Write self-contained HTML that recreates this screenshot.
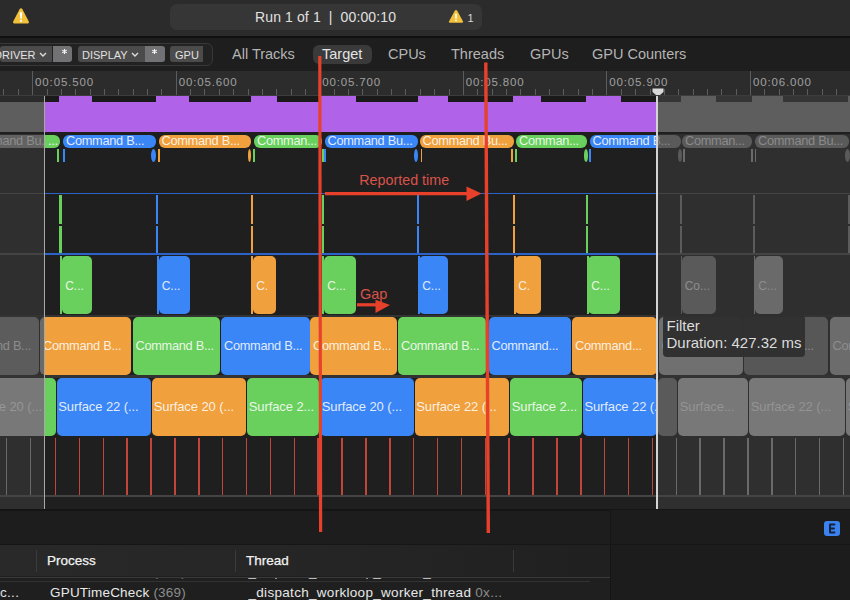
<!DOCTYPE html><html><head><meta charset="utf-8"><style>
html,body{margin:0;padding:0;width:850px;height:600px;overflow:hidden;background:#1f1f1f;}
body{position:relative;font-family:"Liberation Sans",sans-serif;}
.t{position:absolute;white-space:nowrap;line-height:1;}
.clip{position:absolute;overflow:hidden;}
</style></head><body>
<div style="position:absolute;left:0px;top:0px;width:850px;height:36px;background:#2b2b2b;border-radius:0px;"></div>
<div style="position:absolute;left:0px;top:36px;width:850px;height:2px;background:#101010;border-radius:0px;"></div>
<svg style="position:absolute;left:12px;top:7px" width="18" height="18" viewBox="0 0 18 17" preserveAspectRatio="none">
<path d="M9 1.2 Q9.9 1.2 10.4 2.1 L16.8 13.8 Q17.3 14.9 16.2 15.6 L1.8 15.6 Q0.7 14.9 1.2 13.8 L7.6 2.1 Q8.1 1.2 9 1.2 Z" fill="#f2c13b"/>
<path d="M7.6 5.2 Q9 4.2 10.4 5.2 L9.6 11.2 Q9 11.7 8.4 11.2 Z" fill="#fff"/><circle cx="9" cy="13.1" r="1.1" fill="#fff"/></svg>
<div style="position:absolute;left:170px;top:3.8px;width:312.2px;height:25.8px;background:#363636;border-radius:7px;"></div>
<div class="t" style="left:255px;top:10px;font-size:14px;color:#e0e0e0;letter-spacing:0.12px">Run 1 of 1&nbsp;&nbsp;|&nbsp;&nbsp;00:00:10</div>
<svg style="position:absolute;left:448px;top:9px" width="16" height="15" viewBox="0 0 18 17">
<path d="M9 1.2 Q9.9 1.2 10.4 2.1 L16.8 13.8 Q17.3 14.9 16.2 15.6 L1.8 15.6 Q0.7 14.9 1.2 13.8 L7.6 2.1 Q8.1 1.2 9 1.2 Z" fill="#f2c13b"/>
<rect x="8.1" y="5" width="1.8" height="6" rx="0.9" fill="#fff"/><circle cx="9" cy="13" r="1" fill="#fff"/></svg>
<div class="t" style="left:467.5px;top:12.8px;font-size:11px;color:#d8d8d8;">1</div>
<div style="position:absolute;left:0px;top:38px;width:850px;height:33px;background:#1e1e1e;border-radius:0px;"></div>
<div style="position:absolute;left:-6px;top:43px;width:217px;height:21px;border:1px solid #383838;border-radius:6px;background:#222"></div>
<div style="position:absolute;left:0px;top:46px;width:52px;height:16px;background:#4b4b4b;border-radius:0px;border-radius:3px 0 0 3px"></div>
<div class="t" style="left:-6px;top:49.5px;font-size:11px;color:#e4e4e4;">DRIVER</div>
<svg style="position:absolute;left:39px;top:52px" width="8" height="6"><path d="M1 1 L4 4 L7 1" stroke="#ddd" stroke-width="1.4" fill="none"/></svg>
<div style="position:absolute;left:53px;top:46px;width:19.299999999999997px;height:16px;background:#727275;border-radius:0px;border-radius:0 3px 3px 0"></div>
<svg style="position:absolute;left:61.9px;top:48.9px" width="5" height="5" viewBox="0 0 7 7"><path d="M3.5 0.5 V6.5 M0.9 2 L6.1 5 M0.9 5 L6.1 2" stroke="#f4f4f4" stroke-width="1.6" stroke-linecap="round"/></svg>
<div style="position:absolute;left:77.5px;top:46px;width:67.0px;height:16px;background:#4b4b4b;border-radius:0px;border-radius:3px 0 0 3px"></div>
<div class="t" style="left:82px;top:49.5px;font-size:11px;color:#e0e0e0;">DISPLAY</div>
<svg style="position:absolute;left:131px;top:52px" width="8" height="6"><path d="M1 1 L4 4 L7 1" stroke="#ddd" stroke-width="1.4" fill="none"/></svg>
<div style="position:absolute;left:145px;top:46px;width:19.5px;height:16px;background:#727275;border-radius:0px;border-radius:0 3px 3px 0"></div>
<svg style="position:absolute;left:152.4px;top:48.9px" width="5" height="5" viewBox="0 0 7 7"><path d="M3.5 0.5 V6.5 M0.9 2 L6.1 5 M0.9 5 L6.1 2" stroke="#f4f4f4" stroke-width="1.6" stroke-linecap="round"/></svg>
<div style="position:absolute;left:170px;top:46px;width:32.5px;height:16px;background:#4b4b4b;border-radius:0px;border-radius:3px 0 0 3px"></div>
<div class="t" style="left:175px;top:49.5px;font-size:11px;color:#e0e0e0;">GPU</div>
<div style="position:absolute;left:313px;top:45px;width:59px;height:19px;background:#3a3a3a;border-radius:6px;"></div>
<div class="t" style="left:232px;top:47px;font-size:14.5px;color:#b4b4b4;">All Tracks</div>
<div class="t" style="left:322px;top:47px;font-size:14.5px;color:#e4e4e4;">Target</div>
<div class="t" style="left:388px;top:47px;font-size:14.5px;color:#b4b4b4;">CPUs</div>
<div class="t" style="left:451px;top:47px;font-size:14.5px;color:#b4b4b4;">Threads</div>
<div class="t" style="left:530px;top:47px;font-size:14.5px;color:#b4b4b4;">GPUs</div>
<div class="t" style="left:592px;top:47px;font-size:14.5px;color:#b4b4b4;">GPU Counters</div>
<div style="position:absolute;left:0px;top:71px;width:850px;height:24px;background:#2c2c2c;border-radius:0px;"></div>
<div style="position:absolute;left:0px;top:95px;width:850px;height:1px;background:#3c3c3c;border-radius:0px;"></div>
<div style="position:absolute;left:3.488000000000003px;top:89px;width:1.0px;height:6px;background:#5c5c5c;border-radius:0px;"></div>
<div style="position:absolute;left:17.844px;top:89px;width:1.0px;height:6px;background:#5c5c5c;border-radius:0px;"></div>
<div style="position:absolute;left:32.2px;top:71px;width:1.0px;height:24px;background:#5c5c5c;border-radius:0px;"></div>
<div style="position:absolute;left:46.556000000000004px;top:89px;width:1.0px;height:6px;background:#5c5c5c;border-radius:0px;"></div>
<div style="position:absolute;left:60.912000000000006px;top:89px;width:1.0px;height:6px;background:#5c5c5c;border-radius:0px;"></div>
<div style="position:absolute;left:75.268px;top:89px;width:1.0px;height:6px;background:#5c5c5c;border-radius:0px;"></div>
<div style="position:absolute;left:89.624px;top:89px;width:1.0px;height:6px;background:#5c5c5c;border-radius:0px;"></div>
<div style="position:absolute;left:103.98px;top:89px;width:1.0px;height:6px;background:#5c5c5c;border-radius:0px;"></div>
<div style="position:absolute;left:118.336px;top:89px;width:1.0px;height:6px;background:#5c5c5c;border-radius:0px;"></div>
<div style="position:absolute;left:132.692px;top:89px;width:1.0px;height:6px;background:#5c5c5c;border-radius:0px;"></div>
<div style="position:absolute;left:147.048px;top:89px;width:1.0px;height:6px;background:#5c5c5c;border-radius:0px;"></div>
<div style="position:absolute;left:161.404px;top:89px;width:1.0px;height:6px;background:#5c5c5c;border-radius:0px;"></div>
<div style="position:absolute;left:175.76px;top:71px;width:1.0px;height:24px;background:#5c5c5c;border-radius:0px;"></div>
<div style="position:absolute;left:190.11599999999999px;top:89px;width:1.0px;height:6px;background:#5c5c5c;border-radius:0px;"></div>
<div style="position:absolute;left:204.47199999999998px;top:89px;width:1.0px;height:6px;background:#5c5c5c;border-radius:0px;"></div>
<div style="position:absolute;left:218.82799999999997px;top:89px;width:1.0px;height:6px;background:#5c5c5c;border-radius:0px;"></div>
<div style="position:absolute;left:233.18400000000003px;top:89px;width:1.0px;height:6px;background:#5c5c5c;border-radius:0px;"></div>
<div style="position:absolute;left:247.54000000000002px;top:89px;width:1.0px;height:6px;background:#5c5c5c;border-radius:0px;"></div>
<div style="position:absolute;left:261.896px;top:89px;width:1.0px;height:6px;background:#5c5c5c;border-radius:0px;"></div>
<div style="position:absolute;left:276.252px;top:89px;width:1.0px;height:6px;background:#5c5c5c;border-radius:0px;"></div>
<div style="position:absolute;left:290.608px;top:89px;width:1.0px;height:6px;background:#5c5c5c;border-radius:0px;"></div>
<div style="position:absolute;left:304.964px;top:89px;width:1.0px;height:6px;background:#5c5c5c;border-radius:0px;"></div>
<div style="position:absolute;left:319.32px;top:71px;width:1.0px;height:24px;background:#5c5c5c;border-radius:0px;"></div>
<div style="position:absolute;left:333.676px;top:89px;width:1.0px;height:6px;background:#5c5c5c;border-radius:0px;"></div>
<div style="position:absolute;left:348.032px;top:89px;width:1.0px;height:6px;background:#5c5c5c;border-radius:0px;"></div>
<div style="position:absolute;left:362.388px;top:89px;width:1.0px;height:6px;background:#5c5c5c;border-radius:0px;"></div>
<div style="position:absolute;left:376.74399999999997px;top:89px;width:1.0px;height:6px;background:#5c5c5c;border-radius:0px;"></div>
<div style="position:absolute;left:391.09999999999997px;top:89px;width:1.0px;height:6px;background:#5c5c5c;border-radius:0px;"></div>
<div style="position:absolute;left:405.45599999999996px;top:89px;width:1.0px;height:6px;background:#5c5c5c;border-radius:0px;"></div>
<div style="position:absolute;left:419.812px;top:89px;width:1.0px;height:6px;background:#5c5c5c;border-radius:0px;"></div>
<div style="position:absolute;left:434.168px;top:89px;width:1.0px;height:6px;background:#5c5c5c;border-radius:0px;"></div>
<div style="position:absolute;left:448.524px;top:89px;width:1.0px;height:6px;background:#5c5c5c;border-radius:0px;"></div>
<div style="position:absolute;left:462.88px;top:71px;width:1.0px;height:24px;background:#5c5c5c;border-radius:0px;"></div>
<div style="position:absolute;left:477.236px;top:89px;width:1.0px;height:6px;background:#5c5c5c;border-radius:0px;"></div>
<div style="position:absolute;left:491.592px;top:89px;width:1.0px;height:6px;background:#5c5c5c;border-radius:0px;"></div>
<div style="position:absolute;left:505.948px;top:89px;width:1.0px;height:6px;background:#5c5c5c;border-radius:0px;"></div>
<div style="position:absolute;left:520.304px;top:89px;width:1.0px;height:6px;background:#5c5c5c;border-radius:0px;"></div>
<div style="position:absolute;left:534.66px;top:89px;width:1.0px;height:6px;background:#5c5c5c;border-radius:0px;"></div>
<div style="position:absolute;left:549.0160000000001px;top:89px;width:1.0px;height:6px;background:#5c5c5c;border-radius:0px;"></div>
<div style="position:absolute;left:563.3720000000001px;top:89px;width:1.0px;height:6px;background:#5c5c5c;border-radius:0px;"></div>
<div style="position:absolute;left:577.7280000000001px;top:89px;width:1.0px;height:6px;background:#5c5c5c;border-radius:0px;"></div>
<div style="position:absolute;left:592.0840000000001px;top:89px;width:1.0px;height:6px;background:#5c5c5c;border-radius:0px;"></div>
<div style="position:absolute;left:606.44px;top:71px;width:1.0px;height:24px;background:#5c5c5c;border-radius:0px;"></div>
<div style="position:absolute;left:620.796px;top:89px;width:1.0px;height:6px;background:#5c5c5c;border-radius:0px;"></div>
<div style="position:absolute;left:635.152px;top:89px;width:1.0px;height:6px;background:#5c5c5c;border-radius:0px;"></div>
<div style="position:absolute;left:649.508px;top:89px;width:1.0px;height:6px;background:#5c5c5c;border-radius:0px;"></div>
<div style="position:absolute;left:663.864px;top:89px;width:1.0px;height:6px;background:#5c5c5c;border-radius:0px;"></div>
<div style="position:absolute;left:678.22px;top:89px;width:1.0px;height:6px;background:#5c5c5c;border-radius:0px;"></div>
<div style="position:absolute;left:692.576px;top:89px;width:1.0px;height:6px;background:#5c5c5c;border-radius:0px;"></div>
<div style="position:absolute;left:706.932px;top:89px;width:1.0px;height:6px;background:#5c5c5c;border-radius:0px;"></div>
<div style="position:absolute;left:721.288px;top:89px;width:1.0px;height:6px;background:#5c5c5c;border-radius:0px;"></div>
<div style="position:absolute;left:735.644px;top:89px;width:1.0px;height:6px;background:#5c5c5c;border-radius:0px;"></div>
<div style="position:absolute;left:750.0px;top:71px;width:1.0px;height:24px;background:#5c5c5c;border-radius:0px;"></div>
<div style="position:absolute;left:764.356px;top:89px;width:1.0px;height:6px;background:#5c5c5c;border-radius:0px;"></div>
<div style="position:absolute;left:778.712px;top:89px;width:1.0px;height:6px;background:#5c5c5c;border-radius:0px;"></div>
<div style="position:absolute;left:793.068px;top:89px;width:1.0px;height:6px;background:#5c5c5c;border-radius:0px;"></div>
<div style="position:absolute;left:807.4240000000001px;top:89px;width:1.0px;height:6px;background:#5c5c5c;border-radius:0px;"></div>
<div style="position:absolute;left:821.7800000000001px;top:89px;width:1.0px;height:6px;background:#5c5c5c;border-radius:0px;"></div>
<div style="position:absolute;left:836.1360000000001px;top:89px;width:1.0px;height:6px;background:#5c5c5c;border-radius:0px;"></div>
<div class="t" style="left:35.1px;top:76.5px;font-size:11.5px;color:#a0a0a0;letter-spacing:0.85px">00:05.500</div>
<div class="t" style="left:178.66px;top:76.5px;font-size:11.5px;color:#a0a0a0;letter-spacing:0.85px">00:05.600</div>
<div class="t" style="left:322.21999999999997px;top:76.5px;font-size:11.5px;color:#a0a0a0;letter-spacing:0.85px">00:05.700</div>
<div class="t" style="left:465.78px;top:76.5px;font-size:11.5px;color:#a0a0a0;letter-spacing:0.85px">00:05.800</div>
<div class="t" style="left:609.34px;top:76.5px;font-size:11.5px;color:#a0a0a0;letter-spacing:0.85px">00:05.900</div>
<div class="t" style="left:752.9px;top:76.5px;font-size:11.5px;color:#a0a0a0;letter-spacing:0.85px">00:06.000</div>
<div style="position:absolute;left:0px;top:96px;width:850px;height:414px;background:#1f1f1f;border-radius:0px;"></div>
<div style="position:absolute;left:0px;top:96px;width:45px;height:414px;background:#2f2f2f;border-radius:0px;"></div>
<div style="position:absolute;left:658px;top:96px;width:192px;height:414px;background:#2f2f2f;border-radius:0px;"></div>
<div style="position:absolute;left:45px;top:96px;width:612px;height:6px;background:#1a1a1a;border-radius:0px;"></div>
<div style="position:absolute;left:45px;top:102px;width:612px;height:30.19999999999999px;background:#b063e8;border-radius:0px;"></div>
<div style="position:absolute;left:59px;top:96px;width:33px;height:6px;background:#b063e8;border-radius:0px;"></div>
<div style="position:absolute;left:156px;top:96px;width:33px;height:6px;background:#b063e8;border-radius:0px;"></div>
<div style="position:absolute;left:251px;top:96px;width:25.5px;height:6px;background:#b063e8;border-radius:0px;"></div>
<div style="position:absolute;left:320px;top:96px;width:36px;height:6px;background:#b063e8;border-radius:0px;"></div>
<div style="position:absolute;left:418px;top:96px;width:30px;height:6px;background:#b063e8;border-radius:0px;"></div>
<div style="position:absolute;left:513px;top:96px;width:28px;height:6px;background:#b063e8;border-radius:0px;"></div>
<div style="position:absolute;left:586px;top:96px;width:35px;height:6px;background:#b063e8;border-radius:0px;"></div>
<div style="position:absolute;left:0px;top:96px;width:45px;height:6px;background:#2a2a2a;border-radius:0px;"></div>
<div style="position:absolute;left:0px;top:102px;width:45px;height:30.5px;background:#5e5e5e;border-radius:0px;"></div>
<div style="position:absolute;left:658px;top:102px;width:192px;height:30.5px;background:#5e5e5e;border-radius:0px;"></div>
<div style="position:absolute;left:658px;top:96px;width:192px;height:6px;background:#5e5e5e;border-radius:0px;"></div>
<div style="position:absolute;left:658px;top:96px;width:23px;height:6px;background:#353535;border-radius:0px;"></div>
<div style="position:absolute;left:715.6px;top:96px;width:36.39999999999998px;height:6px;background:#353535;border-radius:0px;"></div>
<div style="position:absolute;left:783px;top:96px;width:65px;height:6px;background:#353535;border-radius:0px;"></div>
<div style="position:absolute;left:0px;top:132.2px;width:850px;height:2.3000000000000114px;background:#1f1f1f;border-radius:0px;"></div>
<div class="clip" style="left:-37px;top:134.5px;width:82px;height:13.0px;background:#626262;border-radius:6px 0 0 6px"><div class="t" style="left:3px;top:0.5999999999999996px;font-size:12.8px;color:#8c8c8c;letter-spacing:-0.3px">Command Bu...</div></div>
<div class="clip" style="left:45px;top:134.5px;width:14.5px;height:13.0px;background:#69cf5d;border-radius:0 6px 6px 0"><div class="t" style="left:3px;top:0.5999999999999996px;font-size:12.8px;color:#f4f4f4;letter-spacing:-0.3px">...</div></div>
<div class="clip" style="left:63px;top:134.5px;width:93px;height:13.0px;background:#3b86f6;border-radius:6px"><div class="t" style="left:3px;top:0.5999999999999996px;font-size:12.8px;color:rgba(255,255,255,0.86);letter-spacing:-0.3px">Command B...</div></div>
<div class="clip" style="left:158.5px;top:134.5px;width:92.5px;height:13.0px;background:#f0a03d;border-radius:6px"><div class="t" style="left:3px;top:0.5999999999999996px;font-size:12.8px;color:rgba(255,255,255,0.86);letter-spacing:-0.3px">Command B...</div></div>
<div class="clip" style="left:254px;top:134.5px;width:68px;height:13.0px;background:#69cf5d;border-radius:6px"><div class="t" style="left:3px;top:0.5999999999999996px;font-size:12.8px;color:rgba(255,255,255,0.86);letter-spacing:-0.3px">Comman...</div></div>
<div class="clip" style="left:324.5px;top:134.5px;width:93.5px;height:13.0px;background:#3b86f6;border-radius:6px"><div class="t" style="left:3px;top:0.5999999999999996px;font-size:12.8px;color:rgba(255,255,255,0.86);letter-spacing:-0.3px">Command Bu...</div></div>
<div class="clip" style="left:419.5px;top:134.5px;width:94.5px;height:13.0px;background:#f0a03d;border-radius:6px"><div class="t" style="left:3px;top:0.5999999999999996px;font-size:12.8px;color:rgba(255,255,255,0.86);letter-spacing:-0.3px">Command Bu...</div></div>
<div class="clip" style="left:516px;top:134.5px;width:71px;height:13.0px;background:#69cf5d;border-radius:6px"><div class="t" style="left:3px;top:0.5999999999999996px;font-size:12.8px;color:rgba(255,255,255,0.86);letter-spacing:-0.3px">Comman...</div></div>
<div class="clip" style="left:589.5px;top:134.5px;width:67.5px;height:13.0px;background:#3b86f6;border-radius:6px 0 0 6px"><div class="t" style="left:3px;top:0.5999999999999996px;font-size:12.8px;color:rgba(255,255,255,0.86);letter-spacing:-0.3px">Command B...</div></div>
<div class="clip" style="left:682px;top:134.5px;width:70px;height:13.0px;background:#5a5a5a;border-radius:6px"><div class="t" style="left:3px;top:0.5999999999999996px;font-size:12.8px;color:#8a8a8a;letter-spacing:-0.3px">Comman...</div></div>
<div class="clip" style="left:755px;top:134.5px;width:94px;height:13.0px;background:#5a5a5a;border-radius:6px"><div class="t" style="left:3px;top:0.5999999999999996px;font-size:12.8px;color:#8a8a8a;letter-spacing:-0.3px">Command Bu...</div></div>
<div style="position:absolute;left:657px;top:134.5px;width:24px;height:13.0px;background:#5a5a5a;border-radius:0px;border-radius:0 6px 6px 0"></div>
<div class="clip" style="left:657px;top:134.5px;width:24px;height:13px;border-radius:0 6px 6px 0"><div class="t" style="left:-65px;top:0.6px;font-size:12.8px;letter-spacing:-0.3px;color:#8a8a8a">Command B...</div></div>
<div style="position:absolute;left:57px;top:148.8px;width:2px;height:13.199999999999989px;background:#69cf5d;border-radius:0px;"></div>
<div style="position:absolute;left:63px;top:148.8px;width:1.5px;height:13.199999999999989px;background:#3b86f6;border-radius:0px;"></div>
<div style="position:absolute;left:151px;top:148.8px;width:5px;height:13.199999999999989px;background:#3b86f6;border-radius:0px;border-radius:50%"></div>
<div style="position:absolute;left:158px;top:148.8px;width:2px;height:13.199999999999989px;background:#f0a03d;border-radius:0px;"></div>
<div style="position:absolute;left:247.5px;top:148.8px;width:3.5px;height:13.199999999999989px;background:#f0a03d;border-radius:0px;border-radius:50%"></div>
<div style="position:absolute;left:253.2px;top:148.8px;width:2.0px;height:13.199999999999989px;background:#69cf5d;border-radius:0px;"></div>
<div style="position:absolute;left:321.5px;top:148.8px;width:2.0px;height:13.199999999999989px;background:#69cf5d;border-radius:0px;"></div>
<div style="position:absolute;left:324px;top:148.8px;width:2px;height:13.199999999999989px;background:#3b86f6;border-radius:0px;"></div>
<div style="position:absolute;left:414px;top:148.8px;width:4px;height:13.199999999999989px;background:#3b86f6;border-radius:0px;border-radius:50%"></div>
<div style="position:absolute;left:420.5px;top:148.8px;width:1.8000000000000114px;height:13.199999999999989px;background:#f0a03d;border-radius:0px;"></div>
<div style="position:absolute;left:511px;top:148.8px;width:2px;height:13.199999999999989px;background:#f0a03d;border-radius:0px;"></div>
<div style="position:absolute;left:515px;top:148.8px;width:2px;height:13.199999999999989px;background:#69cf5d;border-radius:0px;"></div>
<div style="position:absolute;left:583.5px;top:148.8px;width:4.5px;height:13.199999999999989px;background:#69cf5d;border-radius:0px;border-radius:50%"></div>
<div style="position:absolute;left:589px;top:148.8px;width:1.5px;height:13.199999999999989px;background:#3b86f6;border-radius:0px;"></div>
<div style="position:absolute;left:678px;top:148.8px;width:4px;height:13.199999999999989px;background:#5a5a5a;border-radius:0px;border-radius:50%"></div>
<div style="position:absolute;left:683px;top:148.8px;width:2px;height:13.199999999999989px;background:#6a6a6a;border-radius:0px;"></div>
<div style="position:absolute;left:750.5px;top:148.8px;width:2.0px;height:13.199999999999989px;background:#6a6a6a;border-radius:0px;"></div>
<div style="position:absolute;left:754.5px;top:148.8px;width:1.5px;height:13.199999999999989px;background:#6a6a6a;border-radius:0px;"></div>
<div style="position:absolute;left:845px;top:148.8px;width:5px;height:13.199999999999989px;background:#5a5a5a;border-radius:0px;border-radius:50%"></div>
<div style="position:absolute;left:45px;top:192.8px;width:612px;height:1.1999999999999886px;background:#2c63c9;border-radius:0px;"></div>
<div style="position:absolute;left:0px;top:192.8px;width:45px;height:1.1999999999999886px;background:#444;border-radius:0px;"></div>
<div style="position:absolute;left:658px;top:192.8px;width:192px;height:1.1999999999999886px;background:#444;border-radius:0px;"></div>
<div style="position:absolute;left:45px;top:253.4px;width:612px;height:1.1999999999999886px;background:#2c63c9;border-radius:0px;"></div>
<div style="position:absolute;left:0px;top:253.4px;width:45px;height:1.1999999999999886px;background:#444;border-radius:0px;"></div>
<div style="position:absolute;left:658px;top:253.4px;width:192px;height:1.1999999999999886px;background:#444;border-radius:0px;"></div>
<div style="position:absolute;left:59.3px;top:195px;width:2.5px;height:28.5px;background:#69cf5d;border-radius:0px;"></div>
<div style="position:absolute;left:59.3px;top:225.5px;width:2.5px;height:27.0px;background:#69cf5d;border-radius:0px;"></div>
<div style="position:absolute;left:156px;top:195px;width:2px;height:28.5px;background:#3b86f6;border-radius:0px;"></div>
<div style="position:absolute;left:156px;top:225.5px;width:2px;height:27.0px;background:#3b86f6;border-radius:0px;"></div>
<div style="position:absolute;left:251px;top:195px;width:1.5px;height:28.5px;background:#f0a03d;border-radius:0px;"></div>
<div style="position:absolute;left:251px;top:225.5px;width:1.5px;height:27.0px;background:#f0a03d;border-radius:0px;"></div>
<div style="position:absolute;left:322px;top:195px;width:2px;height:28.5px;background:#69cf5d;border-radius:0px;"></div>
<div style="position:absolute;left:322px;top:225.5px;width:2px;height:27.0px;background:#69cf5d;border-radius:0px;"></div>
<div style="position:absolute;left:417px;top:195px;width:2px;height:28.5px;background:#3b86f6;border-radius:0px;"></div>
<div style="position:absolute;left:417px;top:225.5px;width:2px;height:27.0px;background:#3b86f6;border-radius:0px;"></div>
<div style="position:absolute;left:513px;top:195px;width:2px;height:28.5px;background:#f0a03d;border-radius:0px;"></div>
<div style="position:absolute;left:513px;top:225.5px;width:2px;height:27.0px;background:#f0a03d;border-radius:0px;"></div>
<div style="position:absolute;left:586px;top:195px;width:2px;height:28.5px;background:#69cf5d;border-radius:0px;"></div>
<div style="position:absolute;left:586px;top:225.5px;width:2px;height:27.0px;background:#69cf5d;border-radius:0px;"></div>
<div style="position:absolute;left:680px;top:195px;width:2px;height:28.5px;background:#5c5c5c;border-radius:0px;"></div>
<div style="position:absolute;left:680px;top:225.5px;width:2px;height:27.0px;background:#5c5c5c;border-radius:0px;"></div>
<div style="position:absolute;left:752.5px;top:195px;width:2.0px;height:28.5px;background:#5c5c5c;border-radius:0px;"></div>
<div style="position:absolute;left:752.5px;top:225.5px;width:2.0px;height:27.0px;background:#5c5c5c;border-radius:0px;"></div>
<div style="position:absolute;left:847.5px;top:195px;width:2.0px;height:28.5px;background:#5c5c5c;border-radius:0px;"></div>
<div style="position:absolute;left:847.5px;top:225.5px;width:2.0px;height:27.0px;background:#5c5c5c;border-radius:0px;"></div>
<div style="position:absolute;left:60px;top:256px;width:1.5px;height:58.19999999999999px;background:#69cf5d;border-radius:0px;"></div>
<div class="clip" style="left:62px;top:256px;width:30px;height:58.19999999999999px;background:#69cf5d;border-radius:5px"><div class="t" style="left:3.2px;top:23.599999999999994px;font-size:12px;color:rgba(255,255,255,0.86);letter-spacing:0px">C...</div></div>
<div style="position:absolute;left:157px;top:256px;width:1.5px;height:58.19999999999999px;background:#3b86f6;border-radius:0px;"></div>
<div class="clip" style="left:158.5px;top:256px;width:31.0px;height:58.19999999999999px;background:#3b86f6;border-radius:5px"><div class="t" style="left:3.2px;top:23.599999999999994px;font-size:12px;color:rgba(255,255,255,0.86);letter-spacing:0px">C...</div></div>
<div style="position:absolute;left:251px;top:256px;width:1.5px;height:58.19999999999999px;background:#f0a03d;border-radius:0px;"></div>
<div class="clip" style="left:253px;top:256px;width:23px;height:58.19999999999999px;background:#f0a03d;border-radius:5px"><div class="t" style="left:3.2px;top:23.599999999999994px;font-size:12px;color:rgba(255,255,255,0.86);letter-spacing:0px">C.</div></div>
<div style="position:absolute;left:322px;top:256px;width:1.5px;height:58.19999999999999px;background:#69cf5d;border-radius:0px;"></div>
<div class="clip" style="left:324px;top:256px;width:32px;height:58.19999999999999px;background:#69cf5d;border-radius:5px"><div class="t" style="left:3.2px;top:23.599999999999994px;font-size:12px;color:rgba(255,255,255,0.86);letter-spacing:0px">C...</div></div>
<div style="position:absolute;left:418px;top:256px;width:1.5px;height:58.19999999999999px;background:#3b86f6;border-radius:0px;"></div>
<div class="clip" style="left:419px;top:256px;width:29px;height:58.19999999999999px;background:#3b86f6;border-radius:5px"><div class="t" style="left:3.2px;top:23.599999999999994px;font-size:12px;color:rgba(255,255,255,0.86);letter-spacing:0px">C...</div></div>
<div style="position:absolute;left:514px;top:256px;width:1.5px;height:58.19999999999999px;background:#f0a03d;border-radius:0px;"></div>
<div class="clip" style="left:515px;top:256px;width:25.5px;height:58.19999999999999px;background:#f0a03d;border-radius:5px"><div class="t" style="left:3.2px;top:23.599999999999994px;font-size:12px;color:rgba(255,255,255,0.86);letter-spacing:0px">C.</div></div>
<div style="position:absolute;left:587px;top:256px;width:1.5px;height:58.19999999999999px;background:#69cf5d;border-radius:0px;"></div>
<div class="clip" style="left:588px;top:256px;width:32px;height:58.19999999999999px;background:#69cf5d;border-radius:5px"><div class="t" style="left:3.2px;top:23.599999999999994px;font-size:12px;color:rgba(255,255,255,0.86);letter-spacing:0px">C...</div></div>
<div style="position:absolute;left:680.5px;top:256px;width:1.5px;height:58.19999999999999px;background:#5a5a5a;border-radius:0px;"></div>
<div class="clip" style="left:681.5px;top:256px;width:34.0px;height:58.19999999999999px;background:#5a5a5a;border-radius:5px"><div class="t" style="left:3.2px;top:23.599999999999994px;font-size:12px;color:#8d8d8d;letter-spacing:0px">Co...</div></div>
<div style="position:absolute;left:753.5px;top:256px;width:1.5px;height:58.19999999999999px;background:#6a6a6a;border-radius:0px;"></div>
<div class="clip" style="left:755px;top:256px;width:28px;height:58.19999999999999px;background:#6a6a6a;border-radius:5px"><div class="t" style="left:3.2px;top:23.599999999999994px;font-size:12px;color:#8d8d8d;letter-spacing:0px">C...</div></div>
<div style="position:absolute;left:0px;top:314.5px;width:850px;height:2.0px;background:#333;border-radius:0px;"></div>
<div class="clip" style="left:-7px;top:316.5px;width:46px;height:58.5px;background:#5c5c5c;border-radius:5px"><div class="t" style="left:3px;top:23.35px;font-size:12.8px;color:#8c8c8c;letter-spacing:-0.3px">nd B...</div></div>
<div class="clip" style="left:39.5px;top:316.5px;width:10.5px;height:58.5px;background:#6a6a6a;border-radius:5px"><div class="t" style="left:3px;top:23.35px;font-size:12.8px;color:rgba(255,255,255,0.86);letter-spacing:-0.3px"></div></div>
<div class="clip" style="left:45px;top:316.5px;width:86px;height:58.5px;background:#f0a03d;border-radius:0 5px 5px 0"><div class="t" style="left:-2px;top:23.35px;font-size:12.8px;color:rgba(255,255,255,0.86);letter-spacing:-0.3px">Command B...</div></div>
<div class="clip" style="left:132.5px;top:316.5px;width:87.5px;height:58.5px;background:#69cf5d;border-radius:5px"><div class="t" style="left:3px;top:23.35px;font-size:12.8px;color:rgba(255,255,255,0.86);letter-spacing:-0.3px">Command B...</div></div>
<div class="clip" style="left:221px;top:316.5px;width:88.5px;height:58.5px;background:#3b86f6;border-radius:5px"><div class="t" style="left:3px;top:23.35px;font-size:12.8px;color:rgba(255,255,255,0.86);letter-spacing:-0.3px">Command B...</div></div>
<div class="clip" style="left:310px;top:316.5px;width:86.5px;height:58.5px;background:#f0a03d;border-radius:5px"><div class="t" style="left:3px;top:23.35px;font-size:12.8px;color:rgba(255,255,255,0.86);letter-spacing:-0.3px">Command B...</div></div>
<div class="clip" style="left:398px;top:316.5px;width:87.5px;height:58.5px;background:#69cf5d;border-radius:5px"><div class="t" style="left:3px;top:23.35px;font-size:12.8px;color:rgba(255,255,255,0.86);letter-spacing:-0.3px">Command B...</div></div>
<div class="clip" style="left:488.5px;top:316.5px;width:82.5px;height:58.5px;background:#3b86f6;border-radius:5px"><div class="t" style="left:3px;top:23.35px;font-size:12.8px;color:rgba(255,255,255,0.86);letter-spacing:-0.3px">Command...</div></div>
<div class="clip" style="left:572px;top:316.5px;width:85px;height:58.5px;background:#f0a03d;border-radius:5px"><div class="t" style="left:3px;top:23.35px;font-size:12.8px;color:rgba(255,255,255,0.86);letter-spacing:-0.3px">Command...</div></div>
<div class="clip" style="left:658.5px;top:316.5px;width:84.5px;height:58.5px;background:#707070;border-radius:5px"><div class="t" style="left:3px;top:23.35px;font-size:12.8px;color:#8e8e8e;letter-spacing:-0.3px">Command B...</div></div>
<div class="clip" style="left:744px;top:316.5px;width:84px;height:58.5px;background:#575757;border-radius:5px"><div class="t" style="left:3px;top:23.35px;font-size:12.8px;color:#8e8e8e;letter-spacing:-0.3px">Command...</div></div>
<div class="clip" style="left:829.5px;top:316.5px;width:40.5px;height:58.5px;background:#6c6c6c;border-radius:5px"><div class="t" style="left:3px;top:23.35px;font-size:12.8px;color:#8e8e8e;letter-spacing:-0.3px">Command B...</div></div>
<div style="position:absolute;left:0px;top:375px;width:850px;height:2.5px;background:#333;border-radius:0px;"></div>
<div class="clip" style="left:-40px;top:377.5px;width:85px;height:58.0px;background:#787878;border-radius:5px 0 0 5px"><div class="t" style="left:1.8px;top:22.0px;font-size:13px;color:#969696;letter-spacing:-0.1px">Surface 20 (...</div></div>
<div class="clip" style="left:45px;top:377.5px;width:10.5px;height:58.0px;background:#69cf5d;border-radius:0 5px 5px 0"><div class="t" style="left:1.8px;top:22.0px;font-size:13px;color:rgba(255,255,255,0.86);letter-spacing:-0.1px"></div></div>
<div class="clip" style="left:56.5px;top:377.5px;width:94.5px;height:58.0px;background:#3b86f6;border-radius:5px"><div class="t" style="left:1.8px;top:22.0px;font-size:13px;color:rgba(255,255,255,0.86);letter-spacing:-0.1px">Surface 22 (...</div></div>
<div class="clip" style="left:152px;top:377.5px;width:94px;height:58.0px;background:#f0a03d;border-radius:5px"><div class="t" style="left:1.8px;top:22.0px;font-size:13px;color:rgba(255,255,255,0.86);letter-spacing:-0.1px">Surface 20 (...</div></div>
<div class="clip" style="left:247px;top:377.5px;width:72px;height:58.0px;background:#69cf5d;border-radius:5px"><div class="t" style="left:1.8px;top:22.0px;font-size:13px;color:rgba(255,255,255,0.86);letter-spacing:-0.1px">Surface 2...</div></div>
<div class="clip" style="left:320px;top:377.5px;width:93.80000000000001px;height:58.0px;background:#3b86f6;border-radius:5px"><div class="t" style="left:1.8px;top:22.0px;font-size:13px;color:rgba(255,255,255,0.86);letter-spacing:-0.1px">Surface 20 (...</div></div>
<div class="clip" style="left:414.5px;top:377.5px;width:94.5px;height:58.0px;background:#f0a03d;border-radius:5px"><div class="t" style="left:1.8px;top:22.0px;font-size:13px;color:rgba(255,255,255,0.86);letter-spacing:-0.1px">Surface 22 (...</div></div>
<div class="clip" style="left:510px;top:377.5px;width:72px;height:58.0px;background:#69cf5d;border-radius:5px"><div class="t" style="left:1.8px;top:22.0px;font-size:13px;color:rgba(255,255,255,0.86);letter-spacing:-0.1px">Surface 2...</div></div>
<div class="clip" style="left:582.6px;top:377.5px;width:74.39999999999998px;height:58.0px;background:#3b86f6;border-radius:5px"><div class="t" style="left:1.8px;top:22.0px;font-size:13px;color:rgba(255,255,255,0.86);letter-spacing:-0.1px">Surface 22 (...</div></div>
<div class="clip" style="left:658px;top:377.5px;width:19px;height:58.0px;background:#5a5a5a;border-radius:5px"><div class="t" style="left:1.8px;top:22.0px;font-size:13px;color:rgba(255,255,255,0.86);letter-spacing:-0.1px"></div></div>
<div class="clip" style="left:678px;top:377.5px;width:70px;height:58.0px;background:#787878;border-radius:5px"><div class="t" style="left:1.8px;top:22.0px;font-size:13px;color:#949494;letter-spacing:-0.1px">Surface...</div></div>
<div class="clip" style="left:749px;top:377.5px;width:96px;height:58.0px;background:#787878;border-radius:5px"><div class="t" style="left:1.8px;top:22.0px;font-size:13px;color:#949494;letter-spacing:-0.1px">Surface 22 (...</div></div>
<div class="clip" style="left:846px;top:377.5px;width:24px;height:58.0px;background:#787878;border-radius:5px"><div class="t" style="left:1.8px;top:22.0px;font-size:13px;color:#949494;letter-spacing:-0.1px">S</div></div>
<div style="position:absolute;left:5.8px;top:438px;width:1.4000000000000004px;height:57px;background:#6a6a6a;border-radius:0px;"></div>
<div style="position:absolute;left:29.8px;top:438px;width:1.3999999999999986px;height:57px;background:#6a6a6a;border-radius:0px;"></div>
<div style="position:absolute;left:54.75px;top:438px;width:1.5px;height:57px;background:#c2453a;border-radius:0px;"></div>
<div style="position:absolute;left:78.625px;top:438px;width:1.5px;height:57px;background:#c2453a;border-radius:0px;"></div>
<div style="position:absolute;left:102.5px;top:438px;width:1.5px;height:57px;background:#c2453a;border-radius:0px;"></div>
<div style="position:absolute;left:126.375px;top:438px;width:1.5px;height:57px;background:#c2453a;border-radius:0px;"></div>
<div style="position:absolute;left:150.25px;top:438px;width:1.5px;height:57px;background:#c2453a;border-radius:0px;"></div>
<div style="position:absolute;left:174.125px;top:438px;width:1.5px;height:57px;background:#c2453a;border-radius:0px;"></div>
<div style="position:absolute;left:198.0px;top:438px;width:1.5px;height:57px;background:#c2453a;border-radius:0px;"></div>
<div style="position:absolute;left:221.875px;top:438px;width:1.5px;height:57px;background:#c2453a;border-radius:0px;"></div>
<div style="position:absolute;left:245.75px;top:438px;width:1.5px;height:57px;background:#c2453a;border-radius:0px;"></div>
<div style="position:absolute;left:269.625px;top:438px;width:1.5px;height:57px;background:#c2453a;border-radius:0px;"></div>
<div style="position:absolute;left:293.5px;top:438px;width:1.5px;height:57px;background:#c2453a;border-radius:0px;"></div>
<div style="position:absolute;left:317.375px;top:438px;width:1.5px;height:57px;background:#c2453a;border-radius:0px;"></div>
<div style="position:absolute;left:341.25px;top:438px;width:1.5px;height:57px;background:#c2453a;border-radius:0px;"></div>
<div style="position:absolute;left:365.125px;top:438px;width:1.5px;height:57px;background:#c2453a;border-radius:0px;"></div>
<div style="position:absolute;left:389.0px;top:438px;width:1.5px;height:57px;background:#c2453a;border-radius:0px;"></div>
<div style="position:absolute;left:412.875px;top:438px;width:1.5px;height:57px;background:#c2453a;border-radius:0px;"></div>
<div style="position:absolute;left:436.75px;top:438px;width:1.5px;height:57px;background:#c2453a;border-radius:0px;"></div>
<div style="position:absolute;left:460.625px;top:438px;width:1.5px;height:57px;background:#c2453a;border-radius:0px;"></div>
<div style="position:absolute;left:484.5px;top:438px;width:1.5px;height:57px;background:#c2453a;border-radius:0px;"></div>
<div style="position:absolute;left:508.375px;top:438px;width:1.5px;height:57px;background:#c2453a;border-radius:0px;"></div>
<div style="position:absolute;left:532.25px;top:438px;width:1.5px;height:57px;background:#c2453a;border-radius:0px;"></div>
<div style="position:absolute;left:556.125px;top:438px;width:1.5px;height:57px;background:#c2453a;border-radius:0px;"></div>
<div style="position:absolute;left:580.0px;top:438px;width:1.5px;height:57px;background:#c2453a;border-radius:0px;"></div>
<div style="position:absolute;left:603.875px;top:438px;width:1.5px;height:57px;background:#c2453a;border-radius:0px;"></div>
<div style="position:absolute;left:627.75px;top:438px;width:1.5px;height:57px;background:#c2453a;border-radius:0px;"></div>
<div style="position:absolute;left:651.625px;top:438px;width:1.5px;height:57px;background:#c2453a;border-radius:0px;"></div>
<div style="position:absolute;left:675.5px;top:438px;width:1.5px;height:57px;background:#6a6a6a;border-radius:0px;"></div>
<div style="position:absolute;left:699.375px;top:438px;width:1.5px;height:57px;background:#6a6a6a;border-radius:0px;"></div>
<div style="position:absolute;left:723.25px;top:438px;width:1.5px;height:57px;background:#6a6a6a;border-radius:0px;"></div>
<div style="position:absolute;left:747.125px;top:438px;width:1.5px;height:57px;background:#6a6a6a;border-radius:0px;"></div>
<div style="position:absolute;left:771.0px;top:438px;width:1.5px;height:57px;background:#6a6a6a;border-radius:0px;"></div>
<div style="position:absolute;left:794.875px;top:438px;width:1.5px;height:57px;background:#6a6a6a;border-radius:0px;"></div>
<div style="position:absolute;left:818.75px;top:438px;width:1.5px;height:57px;background:#6a6a6a;border-radius:0px;"></div>
<div style="position:absolute;left:842.625px;top:438px;width:1.5px;height:57px;background:#6a6a6a;border-radius:0px;"></div>
<div style="position:absolute;left:0px;top:495px;width:850px;height:2px;background:#444;border-radius:0px;"></div>
<div style="position:absolute;left:45px;top:497px;width:612px;height:13px;background:#1f1f1f;border-radius:0px;"></div>
<div style="position:absolute;left:0px;top:497px;width:45px;height:13px;background:#2f2f2f;border-radius:0px;"></div>
<div style="position:absolute;left:658px;top:497px;width:192px;height:13px;background:#2f2f2f;border-radius:0px;"></div>
<div style="position:absolute;left:44.1px;top:96px;width:1.1999999999999957px;height:414px;background:#a8a8a8;border-radius:0px;"></div>
<div style="position:absolute;left:656.3px;top:96px;width:1.7000000000000455px;height:414px;background:#d4d4d4;border-radius:0px;"></div>
<svg style="position:absolute;left:652px;top:88px" width="12" height="8"><path d="M0.5 0.5 H11.5 V4 L8 7 H4 L0.5 4 Z" fill="#d8d8d8"/></svg>
<div style="position:absolute;left:0px;top:510px;width:850px;height:35px;background:#1d1d1d;border-radius:0px;"></div>
<div style="position:absolute;left:0px;top:509px;width:850px;height:1.5px;background:#151515;border-radius:0px;"></div>
<div style="position:absolute;left:0px;top:545px;width:610px;height:31px;background:linear-gradient(90deg,#292929 0%,#262626 45%,#202020 100%);border-radius:0px;"></div>
<div style="position:absolute;left:610px;top:510px;width:240px;height:90px;background:#1c1c1c;border-radius:0px;"></div>
<div style="position:absolute;left:609.5px;top:510px;width:1.5px;height:90px;background:#151515;border-radius:0px;"></div>
<div style="position:absolute;left:0px;top:544px;width:850px;height:1px;background:#161616;border-radius:0px;"></div>
<div style="position:absolute;left:36px;top:550px;width:1px;height:22px;background:#3a3a3a;border-radius:0px;"></div>
<div style="position:absolute;left:235px;top:550px;width:1px;height:22px;background:#3a3a3a;border-radius:0px;"></div>
<div style="position:absolute;left:513px;top:550px;width:1px;height:22px;background:#3a3a3a;border-radius:0px;"></div>
<div class="t" style="left:47px;top:554px;font-size:13.5px;color:#f2f2f2;-webkit-text-stroke:0.25px #f2f2f2">Process</div>
<div class="t" style="left:246px;top:554px;font-size:13.5px;color:#f2f2f2;-webkit-text-stroke:0.25px #f2f2f2">Thread</div>
<div class="clip" style="left:0;top:577.5px;width:610px;height:3.5px"><div class="t" style="left:50px;top:-12.5px;font-size:13.5px;color:#cfcfcf;letter-spacing:0.2px">GPUTimeCheck <span style="color:#7c7c7c">(369)</span></div><div class="t" style="left:248.5px;top:-12.5px;font-size:13.5px;color:#cfcfcf;letter-spacing:0.3px">_dispatch_workloop_worker_thread <span style="color:#7c7c7c">0x...</span></div></div>
<div style="position:absolute;left:0px;top:576.5px;width:610px;height:1.0px;background:#3a3a3a;border-radius:0px;"></div>
<div style="position:absolute;left:0px;top:581px;width:590px;height:1px;background:#333333;border-radius:0px;"></div>
<div class="t" style="left:0px;top:586px;font-size:13.5px;color:#e0e0e0;letter-spacing:0.3px">c...</div>
<div class="t" style="left:50px;top:586px;font-size:13.5px;color:#e8e8e8;letter-spacing:0.2px">GPUTimeCheck <span style="color:#8c8c8c">(369)</span></div>
<div class="t" style="left:248.5px;top:586px;font-size:13.5px;color:#e8e8e8;letter-spacing:0.3px">_dispatch_workloop_worker_thread <span style="color:#8c8c8c">0x...</span></div>
<div style="position:absolute;left:824px;top:520.6px;width:16px;height:15.600000000000023px;background:#3a82f0;border-radius:3px;"></div>
<svg style="position:absolute;left:828px;top:523px" width="8" height="11" viewBox="0 0 8 11"><path d="M6.5 1.5 H2 V9.5 H6.5 M2 5.5 H6" stroke="#16213a" stroke-width="1.9" fill="none" stroke-linecap="round" stroke-linejoin="round"/></svg>
<svg style="position:absolute;left:0;top:0" width="850" height="600">
<line x1="319.8" y1="56" x2="320.6" y2="532" stroke="#e8412b" stroke-width="3.2"/>
<line x1="485.8" y1="62.5" x2="488.3" y2="533" stroke="#e8412b" stroke-width="3.4"/>
<line x1="325" y1="193.6" x2="468" y2="193.6" stroke="#e8412b" stroke-width="3.2"/>
<path d="M466.5 186.4 L481.5 193.6 L466.5 201 Z" fill="#e8412b"/>
<line x1="357" y1="304.8" x2="377" y2="304.8" stroke="#e8412b" stroke-width="3.2"/>
<path d="M375.5 299.7 L390 305 L375.5 313 Z" fill="#e8412b"/>
</svg>
<div class="t" style="left:359.3px;top:172.7px;font-size:14.3px;color:#d9534a;">Reported time</div>
<div class="t" style="left:360px;top:286.7px;font-size:14.5px;color:#d9534a;">Gap</div>
<div style="position:absolute;left:662.5px;top:314.5px;width:142px;height:42px;background:rgba(48,48,48,0.97);border-radius:4px"></div>
<div class="t" style="left:666.5px;top:318px;font-size:15px;color:#dcdcdc;">Filter</div>
<div class="t" style="left:666.5px;top:334.5px;font-size:15px;color:#dcdcdc;">Duration: 427.32 ms</div>
</body></html>
